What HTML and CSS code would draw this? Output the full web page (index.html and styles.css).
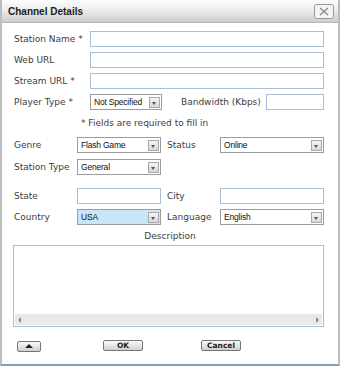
FILE: index.html
```html
<!DOCTYPE html>
<html>
<head>
<meta charset="utf-8">
<link rel="stylesheet" href="styles.css">
</head>
<body>
<div class="dialog">
  <div class="titlebar">
    <span class="title">Channel Details</span>
    <span class="close"><svg width="20" height="15" viewBox="0 0 20 15"><rect x="0.5" y="0.5" width="19" height="14" rx="2" fill="#f4f4f4" stroke="#9a9a9a"/><path d="M6 4 L14 11 M14 4 L6 11" stroke="#8a8a8a" stroke-width="1.3"/></svg></span>
  </div>
  <div class="content">
    <div class="row"><label class="lbl">Station Name *</label><div class="input wide"></div></div>
    <div class="row"><label class="lbl">Web URL</label><div class="input wide"></div></div>
    <div class="row"><label class="lbl">Stream URL *</label><div class="input wide"></div></div>
    <div class="row"><label class="lbl">Player Type *</label><div class="select sel-player"><span class="val">Not Specified</span><span class="arrow"></span></div><label class="lbl-bw">Bandwidth (Kbps)</label><div class="input bw"></div></div>
    <div class="note">* Fields are required to fill in</div>

    <div class="grid g1">
      <label class="lbl2">Genre</label><div class="select"><span class="val">Flash Game</span><span class="arrow"></span></div>
      <label class="lbl3">Status</label><div class="select"><span class="val">Online</span><span class="arrow"></span></div>
      <label class="lbl2">Station Type</label><div class="select"><span class="val">General</span><span class="arrow"></span></div>
      <span></span><span></span>
    </div>

    <div class="grid g2">
      <label class="lbl2">State</label><div class="input"></div>
      <label class="lbl3">City</label><div class="input"></div>
      <label class="lbl2">Country</label><div class="select hl"><span class="val">USA</span><span class="arrow"></span></div>
      <label class="lbl3">Language</label><div class="select"><span class="val">English</span><span class="arrow"></span></div>
    </div>

    <div class="desc-label">Description</div>
    <div class="textarea">
      <div class="hscroll"><span class="la"></span><span class="ra"></span></div>
    </div>

    <div class="buttons">
      <div class="btn up"><span class="tri"></span></div>
      <div class="btn ok">OK</div>
      <div class="btn cancel">Cancel</div>
    </div>
  </div>
</div>
</body>
</html>
```
FILE: styles.css
```css
html, body { margin: 0; padding: 0; background: #fff; }
body { font-family: "DejaVu Sans", Verdana, sans-serif; font-size: 9px; color: #3c3c3c; }
.dialog {
  width: 340px; height: 366px; box-sizing: border-box;
  border-left: 2px solid #bdbdbd; border-right: 2px solid #bdbdbd;
  border-bottom: 2px solid #7f9fc0;
  background: #fff;
}
.titlebar {
  height: 23px; box-sizing: border-box;
  background: linear-gradient(#fdfdfd 0%, #ececec 45%, #cdcdcd 100%);
  border-bottom: 1px solid #b8b8b8;
  display: flex; align-items: center; justify-content: space-between;
  padding: 0 4px 0 6px;
}
.title { font-family: "Liberation Sans", Arial, sans-serif; font-weight: bold; font-size: 10px; color: #222; }
.close { display: flex; }
.content { padding: 8px 0 0 12px; }
.row { display: flex; align-items: center; height: 16px; margin-bottom: 5px; }
.lbl { width: 76px; flex: none; }
.input { box-sizing: border-box; height: 16px; border: 1px solid #a9bdd4; background: #fff; }
.input.wide { width: 234px; }
.select {
  box-sizing: border-box; height: 16px; border: 1px solid #9c9c9c; background: #fff;
  display: flex; align-items: center; justify-content: space-between; padding: 0 1px 0 3px;
}
.select .val { font-family: "Liberation Sans", Arial, sans-serif; font-size: 8.5px; color: #111; letter-spacing: -0.2px; }
.arrow {
  width: 11px; height: 11px; box-sizing: border-box; border: 1px solid #a8a8a8;
  background: linear-gradient(#f4f4f4, #d8d8d8); position: relative;
}
.arrow::after {
  content: ""; position: absolute; left: 2px; top: 4px;
  border-left: 2.5px solid transparent; border-right: 2.5px solid transparent; border-top: 3px solid #555;
}
.sel-player { width: 72px; }
.lbl-bw { margin-left: 19px; width: 85px; flex: none; }
.input.bw { width: 58px; }
.note { padding-left: 67px; height: 16px; line-height: 16px; margin-top: 0; }
.grid {
  display: grid; grid-template-columns: 63px 84px 59px 104px; column-gap: 0;
  align-items: center;
}
.grid > .select, .grid > .input { width: 100%; }
.g1 { margin-top: 6px; row-gap: 6px; grid-template-rows: 16px 16px; }
.g1 .lbl3 { padding-left: 6px; }
.g2 { margin-top: 13px; row-gap: 5px; grid-template-rows: 16px 16px; }
.g2 .lbl3 { padding-left: 6px; }
.select.hl { background: #c8e6f5; }
.desc-label { text-align: center; width: 312px; height: 14px; line-height: 14px; margin-top: 4px; }
.textarea {
  box-sizing: border-box; width: 311px; height: 82px; margin-top: 2px; margin-left: -1px;
  border: 1px solid #a9bdd4; background: #fff; display: flex; flex-direction: column; justify-content: flex-end;
  padding: 0 1px 1px 1px;
}
.hscroll {
  height: 11px; background: #e9e9e9; display: flex; justify-content: space-between; align-items: center; padding: 0 3px;
}
.la { border-top: 3px solid transparent; border-bottom: 3px solid transparent; border-right: 3px solid #888; }
.ra { border-top: 3px solid transparent; border-bottom: 3px solid transparent; border-left: 3px solid #888; }
.buttons { display: flex; align-items: center; margin-top: 12px; height: 12px; }
.btn {
  box-sizing: border-box; height: 11px; border: 1px solid #777; border-radius: 2px;
  background: linear-gradient(#fafafa, #d0d0d0);
  font-family: "DejaVu Sans", sans-serif; font-weight: bold; font-size: 7.5px; color: #222;
  display: flex; align-items: center; justify-content: center;
}
.up { width: 24px; margin-left: 3px; height: 11px; margin-top: 2px; }
.tri { border-left: 4px solid transparent; border-right: 4px solid transparent; border-bottom: 4px solid #222; }
.ok { width: 40px; margin-left: 62px; }
.cancel { width: 40px; margin-left: 58px; }
```
